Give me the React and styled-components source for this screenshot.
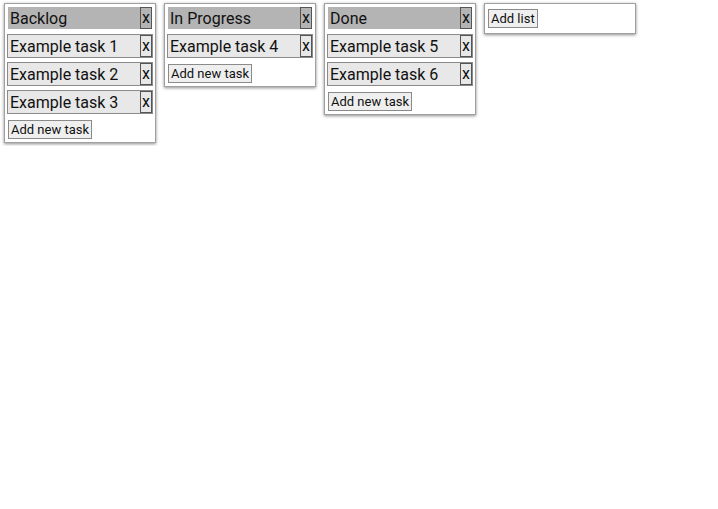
import React, { useState } from 'react';
import styled, { createGlobalStyle } from 'styled-components';

const GlobalStyle = createGlobalStyle`
  body {
    margin: 0;
    background: #fff;
    font-family: Roboto, "Liberation Sans", sans-serif;
  }
`;

const Board = styled.div`
  display: flex;
  align-items: flex-start;
  gap: 8px;
  padding: 3px 4px;
`;

const Column = styled.div`
  width: 146px;
  padding: 3px 2px 2px;
  border: 1px solid #a0a0a0;
  box-shadow: 0 1px 3px rgba(0, 0, 0, 0.45);
  background: #fff;
`;

const Header = styled.div`
  display: flex;
  align-items: center;
  justify-content: space-between;
  height: 22px;
  margin: 0 1px 5px;
  padding-left: 2px;
  background: #b4b4b4;
  color: #111;
  font-size: 16px;
`;

const Task = styled.div`
  display: flex;
  align-items: center;
  justify-content: space-between;
  height: 22px;
  margin-bottom: 4px;
  padding-left: 2px;
  border: 1px solid #8a8a8a;
  background: #e8e8e8;
  color: #111;
  font-size: 16px;
`;

const RemoveButton = styled.button`
  height: 22px;
  padding: 0 1px;
  margin: 0;
  border: 1px solid #555;
  border-radius: 0;
  background: transparent;
  color: #111;
  font-family: Roboto, "Liberation Sans", sans-serif;
  font-size: 16px;
  line-height: 18px;
  cursor: pointer;
`;

const AddButton = styled.button`
  margin: ${p => (p.$list ? '2px 0 3px 1px' : '2px 0 1px 1px')};
  padding: 1px 2px;
  border: 1px solid #8a8a8a;
  border-radius: 0;
  background: #efefef;
  color: #111;
  font-family: Roboto, "Liberation Sans", sans-serif;
  font-size: 13px;
  line-height: 15px;
  cursor: pointer;
`;

const initial = [
  { id: 1, title: 'Backlog', tasks: ['Example task 1', 'Example task 2', 'Example task 3'] },
  { id: 2, title: 'In Progress', tasks: ['Example task 4'] },
  { id: 3, title: 'Done', tasks: ['Example task 5', 'Example task 6'] },
];

export default function App() {
  const [lists, setLists] = useState(initial);

  const removeList = id => setLists(lists.filter(l => l.id !== id));
  const removeTask = (id, i) =>
    setLists(lists.map(l => (l.id === id ? { ...l, tasks: l.tasks.filter((_, j) => j !== i) } : l)));
  const addTask = id =>
    setLists(lists.map(l => (l.id === id ? { ...l, tasks: [...l.tasks, 'New task'] } : l)));
  const addList = () => setLists([...lists, { id: Date.now(), title: 'New list', tasks: [] }]);

  return (
    <>
      <GlobalStyle />
      <Board>
        {lists.map(list => (
          <Column key={list.id}>
            <Header>
              {list.title}
              <RemoveButton onClick={() => removeList(list.id)}>x</RemoveButton>
            </Header>
            {list.tasks.map((t, i) => (
              <Task key={i}>
                {t}
                <RemoveButton onClick={() => removeTask(list.id, i)}>x</RemoveButton>
              </Task>
            ))}
            <AddButton onClick={() => addTask(list.id)}>Add new task</AddButton>
          </Column>
        ))}
        <Column>
          <AddButton $list onClick={addList}>Add list</AddButton>
        </Column>
      </Board>
    </>
  );
}
